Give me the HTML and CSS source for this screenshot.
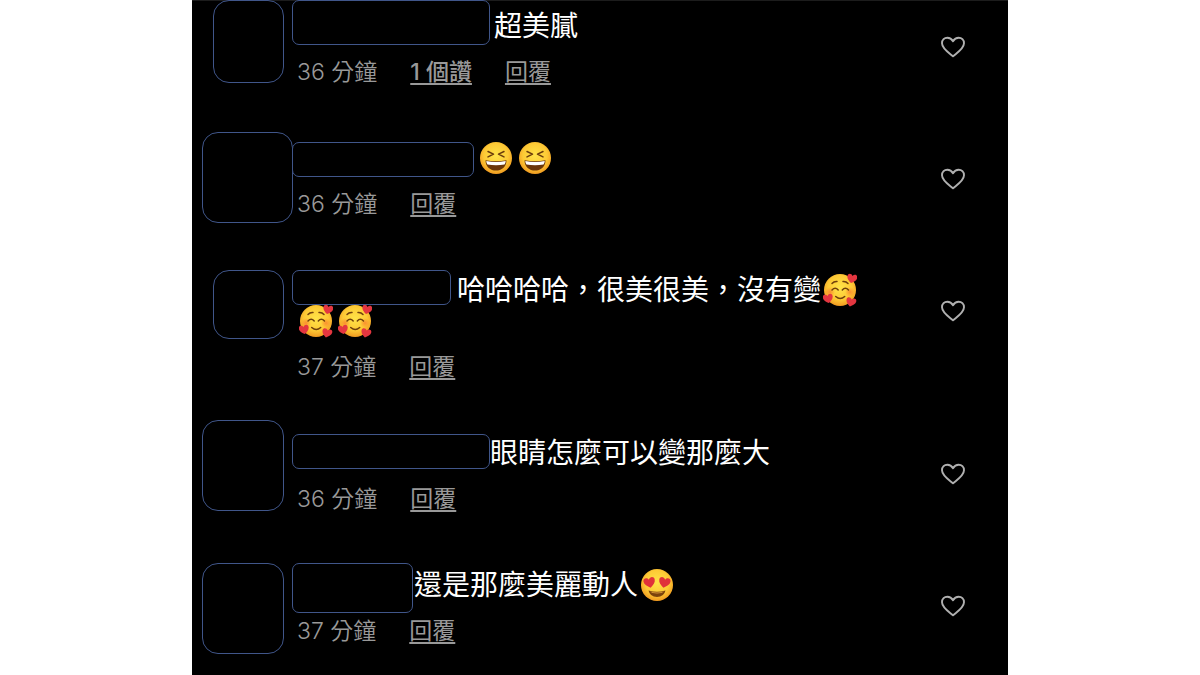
FILE: index.html
```html
<!DOCTYPE html>
<html lang="zh-Hant-TW">
<head>
<meta charset="utf-8">
<meta name="viewport" content="width=device-width, initial-scale=1">
<title>留言</title>
<link rel="stylesheet" href="styles.css">
</head>
<body>
<svg class="defs" aria-hidden="true">
  <defs>
    <radialGradient id="skin" cx="50%" cy="42%" r="58%">
      <stop offset="0" stop-color="#ffe348"/>
      <stop offset="0.65" stop-color="#fdc935"/>
      <stop offset="1" stop-color="#f09a20"/>
    </radialGradient>
    <radialGradient id="blush">
      <stop offset="0" stop-color="#f9762c" stop-opacity="0.7"/>
      <stop offset="1" stop-color="#f9762c" stop-opacity="0"/>
    </radialGradient>
    <path id="love" d="M0 4.600C-2.600 3-5 .8-5-1.700-5-4.600-1.400-5.200 0-2.500 1.400-5.200 5-4.600 5-1.700 5 .8 2.600 3 0 4.600Z"/>
    <symbol id="laugh" viewBox="0 0 34 34">
      <circle cx="17" cy="17" r="16" fill="url(#skin)"/>
      <path d="M9 10.500l5.500 2.600-5.500 2.800M25 10.500l-5.500 2.600 5.500 2.800" fill="none" stroke="#6b3c0c" stroke-width="1.500" stroke-linecap="round" stroke-linejoin="round"/>
      <path d="M6.500 19.200Q17 21.200 27.500 19.200C27.500 26 22.500 29.500 17 29.500S6.500 26 6.500 19.200Z" fill="#6b3509"/>
      <path d="M7.300 20Q17 22 26.700 20 26.600 22 25.500 23.500 17 25 8.500 23.500 7.400 22 7.300 20Z" fill="#fff"/>
    </symbol>
    <symbol id="adore" viewBox="0 0 34 34">
      <circle cx="17" cy="17" r="16" fill="url(#skin)"/>
      <circle cx="7" cy="19" r="5" fill="url(#blush)"/>
      <circle cx="27" cy="19" r="5" fill="url(#blush)"/>
      <path d="M9 10.500q2-2.300 5-2M20 8.500q3-.3 5 2M9 17q3.200-3.400 6.200 0M19.300 17q3-3.400 6.200 0M12.700 23.500q4.600 4 9 0" fill="none" stroke="#70400c" stroke-width="1.500" stroke-linecap="round"/>
      <g fill="#e43640">
        <use href="#love" transform="translate(29 5.500) rotate(12)"/>
        <use href="#love" transform="translate(5 25.500) rotate(-10)"/>
        <use href="#love" transform="translate(28 29) rotate(14)"/>
      </g>
    </symbol>
    <symbol id="hearteyes" viewBox="0 0 34 34">
      <circle cx="17" cy="17" r="16" fill="url(#skin)"/>
      <g fill="#e0323a">
        <use href="#love" transform="translate(9.500 14.500) rotate(-12) scale(1.150)"/>
        <use href="#love" transform="translate(24.500 14.500) rotate(12) scale(1.150)"/>
      </g>
      <path d="M8.500 22.500Q17 25 25.500 22.500 24 29 17 29T8.500 22.500Z" fill="#7b430c"/>
      <path d="M10 23.600Q17 25.500 24 23.600 22 25.500 17 25.500T10 23.600Z" fill="#d99a3c"/>
    </symbol>
    <symbol id="like" viewBox="0 0 26 22">
      <path d="M13 20.300C9 16.800 2 12.500 2 7.200 2 4 4.400 1.700 7.300 1.700 10 1.700 11.800 3.100 13 5.200 14.200 3.100 16 1.700 18.700 1.700 21.600 1.700 24 4 24 7.200 24 12.500 17 16.800 13 20.300Z" fill="none" stroke="#b0b0b0" stroke-width="1.900" stroke-linejoin="round"/>
    </symbol>
  </defs>
</svg>

<main class="panel">
  <article class="comment comment-a">
    <div class="avatar"></div>
    <div class="body">
      <p class="message"><span class="name"></span>超美膩</p>
      <div class="meta"><span>36 分鐘</span><button class="likes" type="button">1 個讚</button><button type="button">回覆</button></div>
    </div>
    <button class="like" type="button" aria-label="讚"><svg><use href="#like"/></svg></button>
  </article>

  <article class="comment comment-b">
    <div class="avatar"></div>
    <div class="body">
      <p class="message"><span class="name"></span><svg class="emoji" role="img" aria-label="😆"><use href="#laugh"/></svg><svg class="emoji" role="img" aria-label="😆"><use href="#laugh"/></svg></p>
      <div class="meta"><span>36 分鐘</span><button type="button">回覆</button></div>
    </div>
    <button class="like" type="button" aria-label="讚"><svg><use href="#like"/></svg></button>
  </article>

  <article class="comment comment-c">
    <div class="avatar"></div>
    <div class="body">
      <p class="message"><span class="name"></span>哈哈哈哈，很美很美，沒有變<svg class="emoji" role="img" aria-label="🥰"><use href="#adore"/></svg><svg class="emoji" role="img" aria-label="🥰"><use href="#adore"/></svg><svg class="emoji" role="img" aria-label="🥰"><use href="#adore"/></svg></p>
      <div class="meta"><span>37 分鐘</span><button type="button">回覆</button></div>
    </div>
    <button class="like" type="button" aria-label="讚"><svg><use href="#like"/></svg></button>
  </article>

  <article class="comment comment-d">
    <div class="avatar"></div>
    <div class="body">
      <p class="message"><span class="name"></span>眼睛怎麼可以變那麼大</p>
      <div class="meta"><span>36 分鐘</span><button type="button">回覆</button></div>
    </div>
    <button class="like" type="button" aria-label="讚"><svg><use href="#like"/></svg></button>
  </article>

  <article class="comment comment-e">
    <div class="avatar"></div>
    <div class="body">
      <p class="message"><span class="name"></span>還是那麼美麗動人<svg class="emoji" role="img" aria-label="😍"><use href="#hearteyes"/></svg></p>
      <div class="meta"><span>37 分鐘</span><button type="button">回覆</button></div>
    </div>
    <button class="like" type="button" aria-label="讚"><svg><use href="#like"/></svg></button>
  </article>
</main>
</body>
</html>
```
FILE: styles.css
```css
* {
  box-sizing: border-box;
}

body {
  margin: 0;
  background: #fff;
  font-family: Inter, "Noto Sans CJK TC", sans-serif;
}

.defs {
  position: absolute;
  width: 0;
  height: 0;
}

.panel {
  display: flex;
  flex-direction: column;
  gap: 55px;
  width: 68%;
  min-height: 100vh;
  margin: 0 auto;
  padding: 10px 42px 20px 10px;
  border-top: 1px solid #1c1c1c;
  background: #000;
}

.comment {
  display: grid;
  grid-template-columns: 90px 1fr 26px;
}

.avatar {
  width: 82px;
  height: 91px;
  margin-bottom: -20px;
  border: 1px solid #40568a;
  border-radius: 16px;
}

.body {
  padding: 0 54px 0 5px;
}

.message {
  margin: 0;
  color: #fff;
  font-size: 28px;
  font-weight: 400;
  line-height: 31px;
}

/* Blanked-out user name; taller than the text line it sits on. */
.name {
  display: inline-block;
  height: 35px;
  margin-left: -5px;
  vertical-align: top;
  border: 1px solid #40568a;
  border-radius: 7px;
  background: #000;
}

.emoji {
  width: 34px;
  height: 34px;
  margin: -2px 3px -1px 2px;
  vertical-align: top;
}

.meta {
  display: flex;
  gap: 33px;
  margin-top: 14px;
  color: #999;
  font-size: 23px;
  font-weight: 350;
  line-height: 32px;
}

button {
  padding: 0;
  border: 0;
  background: none;
  color: inherit;
  font: inherit;
  cursor: pointer;
}

.meta button {
  font-weight: 400;
  text-decoration: underline;
  text-decoration-thickness: 2px;
  text-underline-offset: 3px;
}

.meta .likes {
  font-weight: 500;
}

.like {
  align-self: start;
  margin-top: 25px;
}

.like svg {
  display: block;
  width: 26px;
  height: 22px;
}

.comment-a .avatar {
  width: 71px;
  height: 83px;
  margin-top: -11px;
  margin-left: 11px;
}

.comment-a .name {
  width: 198px;
  height: 45px;
  margin-top: -11px;
  margin-right: 4px;
  margin-bottom: -3px;
}

.comment-b .avatar {
  width: 91px;
  margin-top: -11px;
}

.comment-b .name {
  width: 182px;
  margin-top: -1px;
  margin-right: 3px;
  margin-bottom: -3px;
}

.comment-c .avatar {
  width: 71px;
  height: 69px;
  margin-top: -5px;
  margin-left: 11px;
}

.comment-c .name {
  width: 159px;
  margin-top: -5px;
  margin-right: 6px;
}

.comment-d .avatar {
  margin-top: -18px;
}

.comment-d .name {
  width: 198px;
  margin-top: -4px;
}

.comment-e .avatar {
  margin-top: -7px;
}

.comment-e .name {
  width: 121px;
  height: 50px;
  margin-top: -7px;
  margin-right: 1px;
  margin-bottom: -12px;
}
```
